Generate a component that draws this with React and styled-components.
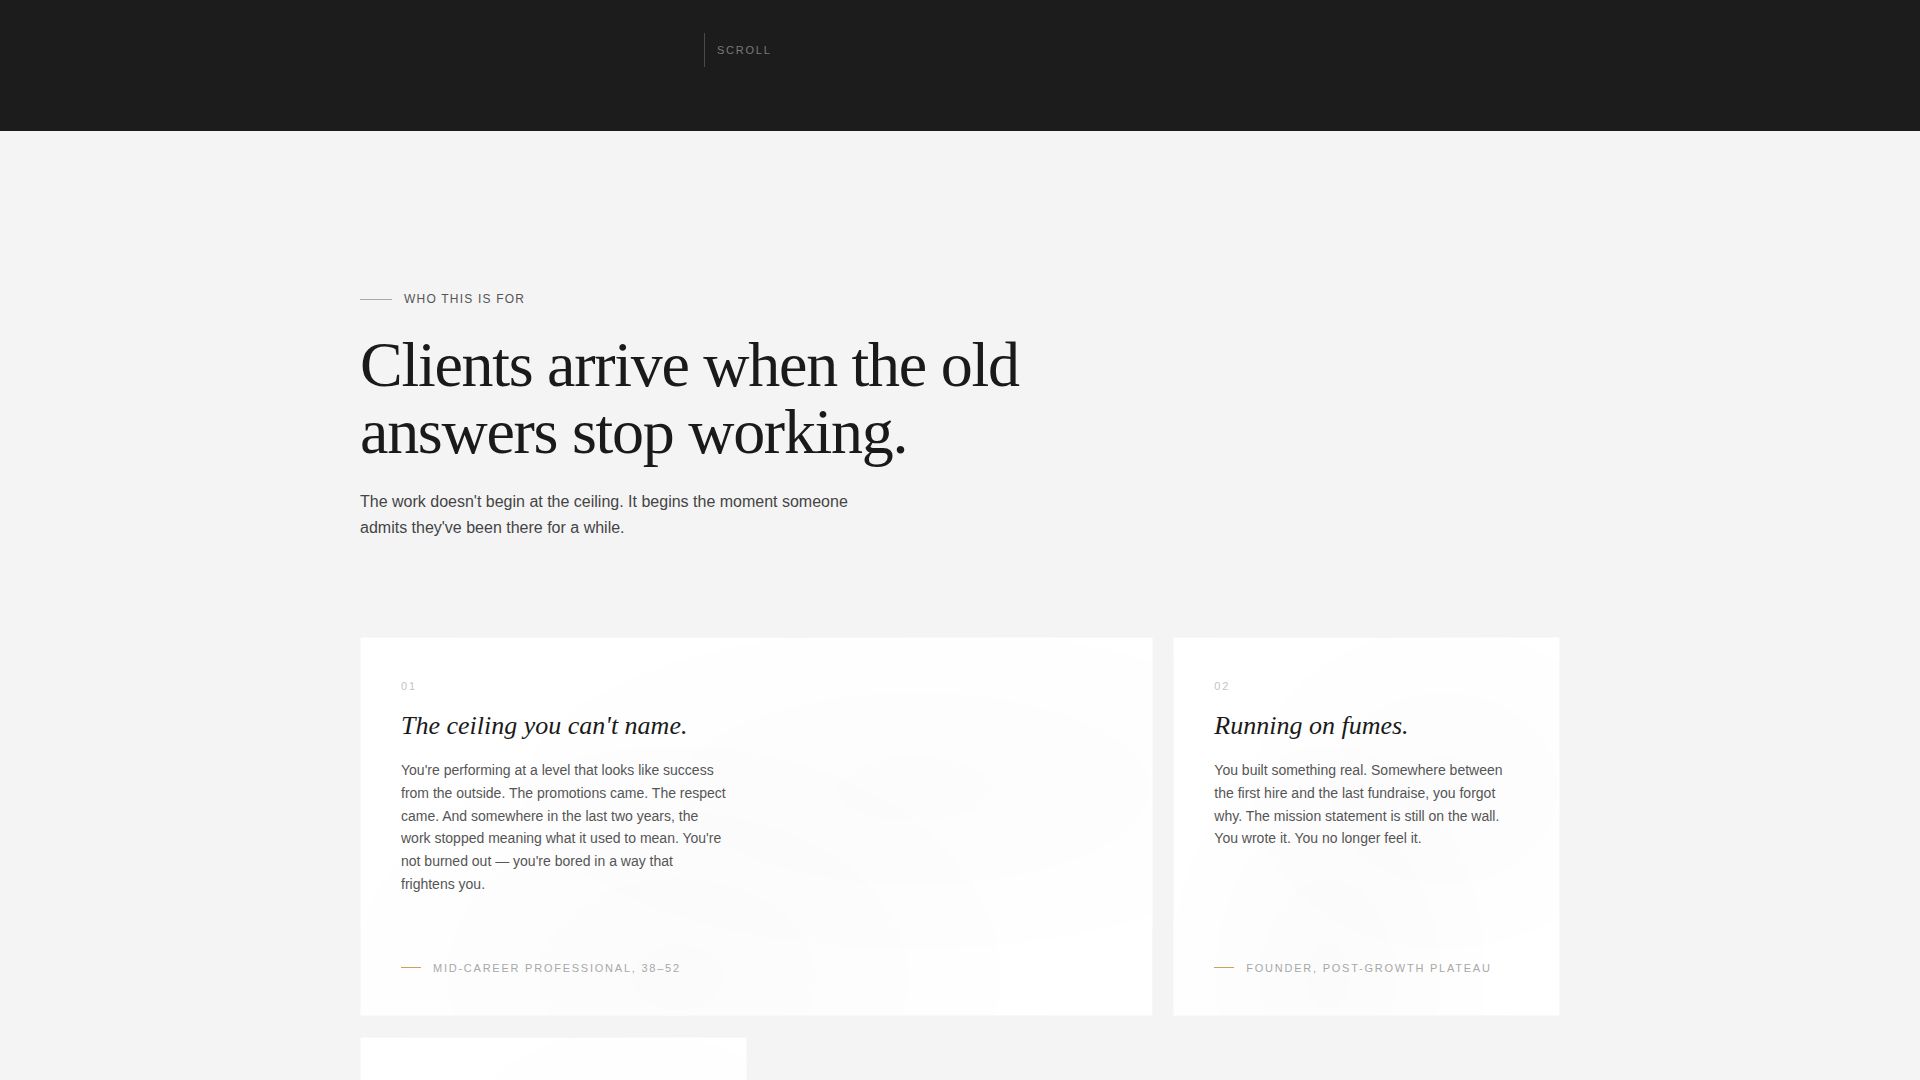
import React from 'react';
import styled, { createGlobalStyle } from 'styled-components';

const GlobalStyle = createGlobalStyle`
  * { box-sizing: border-box; }
  html, body {
    margin: 0;
    padding: 0;
    background: #f4f4f4;
    font-family: "Liberation Sans", Arial, sans-serif;
    -webkit-font-smoothing: antialiased;
  }
`;

const HeroTail = styled.div`
  background: #1c1c1c;
  height: 131px;
  padding: 33px 0 0 704px;
`;

const ScrollCue = styled.div`
  display: flex;
  align-items: center;
  gap: 12px;
  height: 34px;
`;

const ScrollLine = styled.span`
  width: 1px;
  height: 100%;
  background: #4a4a4a;
`;

const ScrollLabel = styled.span`
  font-size: 11px;
  letter-spacing: 0.16em;
  color: #7a7a7a;
  text-transform: uppercase;
`;

const Section = styled.section`
  background: #f4f4f4;
  padding: 160px 0 0;
`;

const Inner = styled.div`
  width: 1200px;
  margin: 0 auto;
`;

const Eyebrow = styled.div`
  display: flex;
  align-items: center;
  gap: 12px;
  font-size: 12px;
  line-height: 16px;
  letter-spacing: 0.1em;
  color: #555;
  text-transform: uppercase;

  &::before {
    content: '';
    width: 32px;
    height: 1px;
    background: #aaa;
  }
`;

const Heading = styled.h2`
  margin: 24px 0 0;
  max-width: 760px;
  font-family: "Liberation Serif", "Times New Roman", serif;
  font-weight: 400;
  font-size: 64px;
  line-height: 67px;
  letter-spacing: -0.02em;
  color: #1a1a1a;
`;

const Lede = styled.p`
  margin: 24px 0 0;
  max-width: 520px;
  font-size: 16px;
  line-height: 26px;
  color: #444;
`;

const Grid = styled.div`
  display: grid;
  grid-template-columns: repeat(3, 1fr);
  gap: 21px 20px;
  margin-top: 96px;
`;

const Card = styled.article`
  grid-column: span ${(p) => p.$span || 1};
  display: flex;
  flex-direction: column;
  min-height: 378px;
  padding: 40px 40px 39px;
  background:
    radial-gradient(ellipse at 70% 40%, rgba(0, 0, 0, 0.012), transparent 60%),
    radial-gradient(ellipse at 40% 90%, rgba(0, 0, 0, 0.014), transparent 55%),
    #fff;
  border: 1px solid rgba(0, 0, 0, 0.025);
`;

const Num = styled.div`
  font-size: 11px;
  line-height: 16px;
  letter-spacing: 0.16em;
  color: #c4c4c4;
`;

const CardTitle = styled.h3`
  margin: 15px 0 0;
  font-family: "Liberation Serif", "Times New Roman", serif;
  font-style: italic;
  font-weight: 400;
  font-size: 26px;
  line-height: 34px;
  color: #1a1a1a;
`;

const CardBody = styled.p`
  margin: 16px 0 0;
  max-width: ${(p) => p.$max || 320}px;
  font-size: 14px;
  line-height: 22.75px;
  color: #555;
`;

const Who = styled.div`
  margin-top: auto;
  padding-top: 64px;
  display: flex;
  align-items: center;
  gap: 12px;
  font-size: 11px;
  line-height: 16px;
  letter-spacing: 0.16em;
  color: #a8a8a8;
  text-transform: uppercase;

  &::before {
    content: '';
    width: 20px;
    height: 1px;
    background: #c8a25a;
  }
`;

const cards = [
  {
    n: '01',
    span: 2,
    max: 328,
    title: "The ceiling you can't name.",
    body: "You're performing at a level that looks like success from the outside. The promotions came. The respect came. And somewhere in the last two years, the work stopped meaning what it used to mean. You're not burned out — you're bored in a way that frightens you.",
    who: 'Mid-career professional, 38–52',
  },
  {
    n: '02',
    span: 1,
    max: 306,
    title: 'Running on fumes.',
    body: 'You built something real. Somewhere between the first hire and the last fundraise, you forgot why. The mission statement is still on the wall. You wrote it. You no longer feel it.',
    who: 'Founder, post-growth plateau',
  },
  {
    n: '03',
    span: 1,
    max: 306,
    title: 'The second act.',
    body: 'The children are grown, the career is settled, and the question you postponed for twenty years has come back louder than before.',
    who: 'Late-career, transition',
  },
];

export default function App() {
  return (
    <>
      <GlobalStyle />
      <HeroTail>
        <ScrollCue>
          <ScrollLine />
          <ScrollLabel>Scroll</ScrollLabel>
        </ScrollCue>
      </HeroTail>
      <Section>
        <Inner>
          <Eyebrow>Who this is for</Eyebrow>
          <Heading>Clients arrive when the old answers stop working.</Heading>
          <Lede>
            The work doesn't begin at the ceiling. It begins the moment someone admits they've been
            there for a while.
          </Lede>
          <Grid>
            {cards.map((c) => (
              <Card key={c.n} $span={c.span}>
                <Num>{c.n}</Num>
                <CardTitle>{c.title}</CardTitle>
                <CardBody $max={c.max}>{c.body}</CardBody>
                <Who>{c.who}</Who>
              </Card>
            ))}
          </Grid>
        </Inner>
      </Section>
    </>
  );
}
